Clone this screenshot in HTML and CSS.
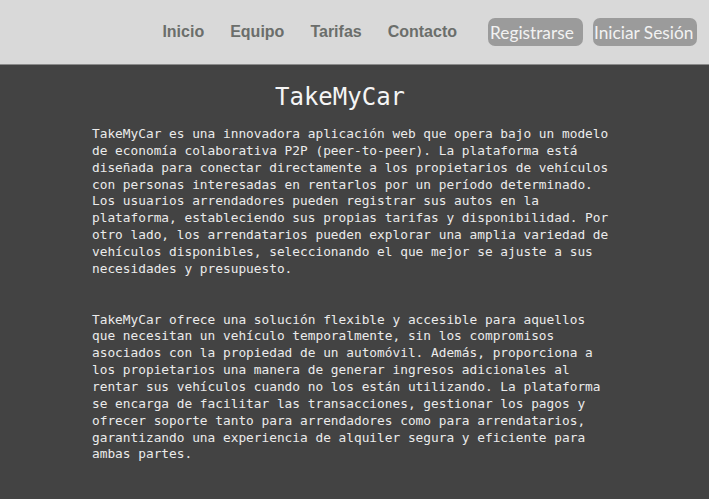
FILE: index.html
```html
<!DOCTYPE html>
<html lang="es">
<head>
<meta charset="utf-8">
<title>TakeMyCar</title>
<link rel="stylesheet" href="styles.css">
</head>
<body>
<header class="topbar">
  <nav class="nav">
    <a class="nav-link" href="#">Inicio</a>
    <a class="nav-link" href="#">Equipo</a>
    <a class="nav-link" href="#">Tarifas</a>
    <a class="nav-link" href="#">Contacto</a>
  </nav>
  <div class="actions">
    <button class="btn btn-register">Registrarse</button>
    <button class="btn btn-login">Iniciar Sesión</button>
  </div>
</header>
<main class="content">
  <h1 class="title">TakeMyCar</h1>
  <p class="para">TakeMyCar es una innovadora aplicación web que opera bajo un modelo de economía colaborativa P2P (peer-to-peer). La plataforma está diseñada para conectar directamente a los propietarios de vehículos con personas interesadas en rentarlos por un período determinado. Los usuarios arrendadores pueden registrar sus autos en la plataforma, estableciendo sus propias tarifas y disponibilidad. Por otro lado, los arrendatarios pueden explorar una amplia variedad de vehículos disponibles, seleccionando el que mejor se ajuste a sus necesidades y presupuesto.</p>
  <p class="para">TakeMyCar ofrece una solución flexible y accesible para aquellos que necesitan un vehículo temporalmente, sin los compromisos asociados con la propiedad de un automóvil. Además, proporciona a los propietarios una manera de generar ingresos adicionales al rentar sus vehículos cuando no los están utilizando. La plataforma se encarga de facilitar las transacciones, gestionar los pagos y ofrecer soporte tanto para arrendadores como para arrendatarios, garantizando una experiencia de alquiler segura y eficiente para ambas partes.</p>
</main>
</body>
</html>
```

FILE: styles.css
```css
html, body {
  margin: 0;
  padding: 0;
  height: 100%;
}
body {
  background: #434343;
  display: flex;
  flex-direction: column;
}
.topbar {
  height: 64px;
  background: #d9d9d9;
  border-bottom: 1px solid #8a8a8a;
  display: flex;
  align-items: center;
  justify-content: flex-end;
  padding-right: 12px;
  box-sizing: content-box;
}
.nav {
  display: flex;
  gap: 26px;
  margin-right: 31px;
}
.nav-link {
  font-family: "Liberation Sans", Arial, sans-serif;
  font-weight: bold;
  font-size: 16px;
  color: #6b6e6b;
  text-decoration: none;
}
.actions {
  display: flex;
  gap: 10px;
}
.btn {
  font-family: "Lato", "Open Sans", sans-serif;
  font-size: 17.3px;
  color: #f2f2f2;
  background: #9b9b9b;
  border: none;
  border-radius: 7px;
  height: 28px;
  padding: 0 0 0 2px;
  text-align: left;
  white-space: nowrap;
}
.btn-register {
  width: 95px;
}
.btn-login {
  width: 104px;
  padding-left: 1px;
}
.content {
  padding: 18px 0 0 92px;
  font-family: "DejaVu Sans Mono", "Liberation Mono", monospace;
  color: #ebebeb;
}
.title {
  font-family: "DejaVu Sans Mono", monospace;
  font-weight: normal;
  font-size: 24px;
  color: #f5f5f5;
  margin: 0 0 15px 183px;
  line-height: 28px;
}
.para {
  width: 520px;
  font-size: 12.8px;
  line-height: 16.85px;
  margin: 0 0 34px 0;
}
```
